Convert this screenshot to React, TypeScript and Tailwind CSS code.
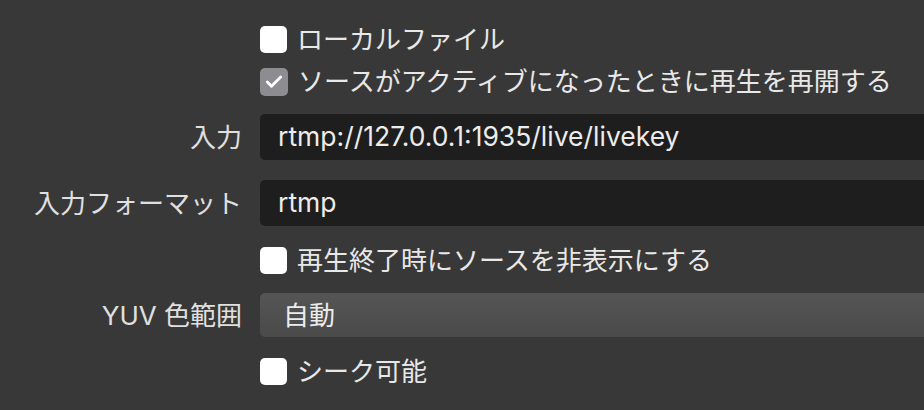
import { Check } from "lucide-react";

const font = { fontFamily: '"Inter", "Noto Sans CJK JP", sans-serif' };

function CheckBox({ checked }: { checked?: boolean }) {
  return (
    <span
      className={
        checked
          ? "flex h-[28px] w-[28px] shrink-0 items-center justify-center rounded-[5px] bg-[#8d8d91]"
          : "flex h-[27px] w-[27px] shrink-0 items-center justify-center rounded-[5px] bg-white"
      }
    >
      {checked && <Check size={20} strokeWidth={3.4} color="#ffffff" />}
    </span>
  );
}

function CheckRow({ label, checked, className }: { label: string; checked?: boolean; className?: string }) {
  return (
    <div className={"flex items-center pl-[260px] " + (className ?? "")}>
      <CheckBox checked={checked} />
      <span className="ml-[10px] whitespace-nowrap leading-none text-[#e8e8e8]">{label}</span>
    </div>
  );
}

function FieldRow({ label, children, className }: { label: string; children: React.ReactNode; className?: string }) {
  return (
    <div className={"flex items-center " + (className ?? "")}>
      <div className="w-[242px] shrink-0 whitespace-nowrap text-right text-[#e0e0e0]">{label}</div>
      <div className="ml-[18px] -mr-[12px] flex-1">{children}</div>
    </div>
  );
}

export default function App() {
  return (
    <div className="h-[410px] w-[924px] overflow-hidden bg-[#383838] text-[26px]" style={font}>
      <CheckRow label="ローカルファイル" className="pt-[26px]" />
      <CheckRow label="ソースがアクティブになったときに再生を再開する" checked className="mt-[15px]" />
      <FieldRow label="入力" className="mt-[18px]">
        <div className="flex h-[46px] items-center rounded-[5px] bg-[#1e1e1e] pl-[18px] text-[26.5px] text-[#ececec]">
          rtmp://127.0.0.1:1935/live/livekey
        </div>
      </FieldRow>
      <FieldRow label="入力フォーマット" className="mt-[20px]">
        <div className="flex h-[46px] items-center rounded-[5px] bg-[#1e1e1e] pl-[18px] text-[26.5px] text-[#ececec]">
          rtmp
        </div>
      </FieldRow>
      <CheckRow label="再生終了時にソースを非表示にする" className="mt-[21px]" />
      <FieldRow label="YUV 色範囲" className="mt-[19px]">
        <div className="flex h-[44px] items-center rounded-[5px] bg-gradient-to-b from-[#555555] to-[#4a4a4a] pl-[23px] text-[#ececec]">
          自動
        </div>
      </FieldRow>
      <CheckRow label="シーク可能" className="mt-[21px]" />
    </div>
  );
}
